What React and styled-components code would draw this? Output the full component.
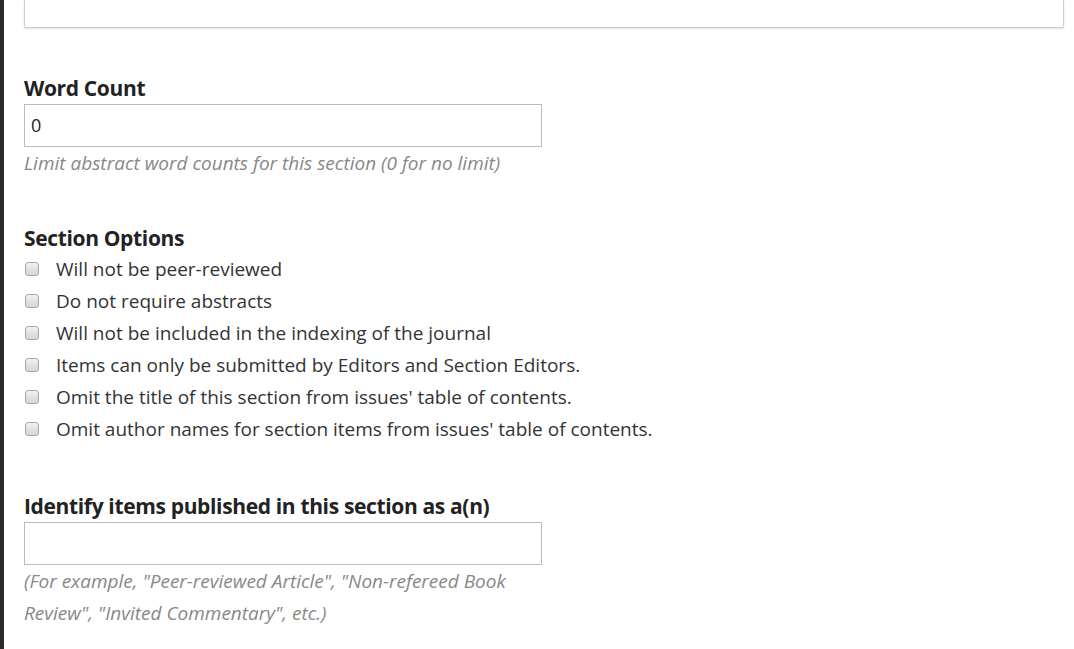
import React from "react";
import styled, { createGlobalStyle } from "styled-components";

const GlobalStyle = createGlobalStyle`
  html, body {
    margin: 0;
    padding: 0;
    background: #fff;
    font-family: "Open Sans", "Noto Sans", sans-serif;
    overflow: hidden;
  }
`;

const Page = styled.div`
  display: flex;
  height: 649px;
  width: 1074px;
`;

const SideEdge = styled.div`
  width: 4px;
  flex-shrink: 0;
  background: #2b2b2b;
`;

const Content = styled.div`
  flex: 1;
  padding: 0 10px 0 20px;
`;

const CutBox = styled.div`
  height: 27px;
  border: 1px solid #cfcfcf;
  border-top: none;
  box-shadow: 0 1px 2px rgba(0, 0, 0, 0.12);
  width: 1038px;
`;

const Field = styled.div`
  margin-top: ${(p) => p.$top}px;
`;

const Label = styled.div`
  font-size: 21px;
  font-weight: 700;
  letter-spacing: -0.35px;
  line-height: 30px;
  color: #222;
  margin-bottom: ${(p) => (p.$gap ? p.$gap : 0)}px;
`;

const Input = styled.div`
  box-sizing: border-box;
  width: 518px;
  height: 43px;
  border: 1px solid #bbb;
  padding: 0 6px;
  font-size: 18px;
  line-height: 41px;
  color: #222;
`;

const Help = styled.div`
  width: 518px;
  font-size: 19px;
  font-style: italic;
  line-height: 32px;
  color: #888;
`;

const Options = styled.div`
  display: flex;
  flex-direction: column;
`;

const OptionRow = styled.div`
  display: flex;
  align-items: center;
  height: 32px;
`;

const Check = styled.span`
  box-sizing: border-box;
  width: 14px;
  height: 14px;
  margin-left: 1px;
  margin-right: 17px;
  border: 1px solid #a5a5a5;
  border-radius: 3px;
  background: linear-gradient(#f1f1f1, #d6d6d6);
  flex-shrink: 0;
`;

const OptionText = styled.span`
  font-size: 19px;
  color: #333;
`;

const options = [
  "Will not be peer-reviewed",
  "Do not require abstracts",
  "Will not be included in the indexing of the journal",
  "Items can only be submitted by Editors and Section Editors.",
  "Omit the title of this section from issues' table of contents.",
  "Omit author names for section items from issues' table of contents.",
];

export default function App() {
  return (
    <>
      <GlobalStyle />
      <Page>
        <SideEdge />
        <Content>
          <CutBox />
          <Field $top={45}>
            <Label $gap={1}>Word Count</Label>
            <Input>0</Input>
            <Help>Limit abstract word counts for this section (0 for no limit)</Help>
          </Field>
          <Field $top={44}>
            <Label>Section Options</Label>
            <Options>
              {options.map((o) => (
                <OptionRow key={o}>
                  <Check />
                  <OptionText>{o}</OptionText>
                </OptionRow>
              ))}
            </Options>
          </Field>
          <Field $top={46}>
            <Label $gap={1}>Identify items published in this section as a(n)</Label>
            <Input />
            <Help>
              (For example, "Peer-reviewed Article", "Non-refereed Book Review", "Invited Commentary", etc.)
            </Help>
          </Field>
        </Content>
      </Page>
    </>
  );
}
